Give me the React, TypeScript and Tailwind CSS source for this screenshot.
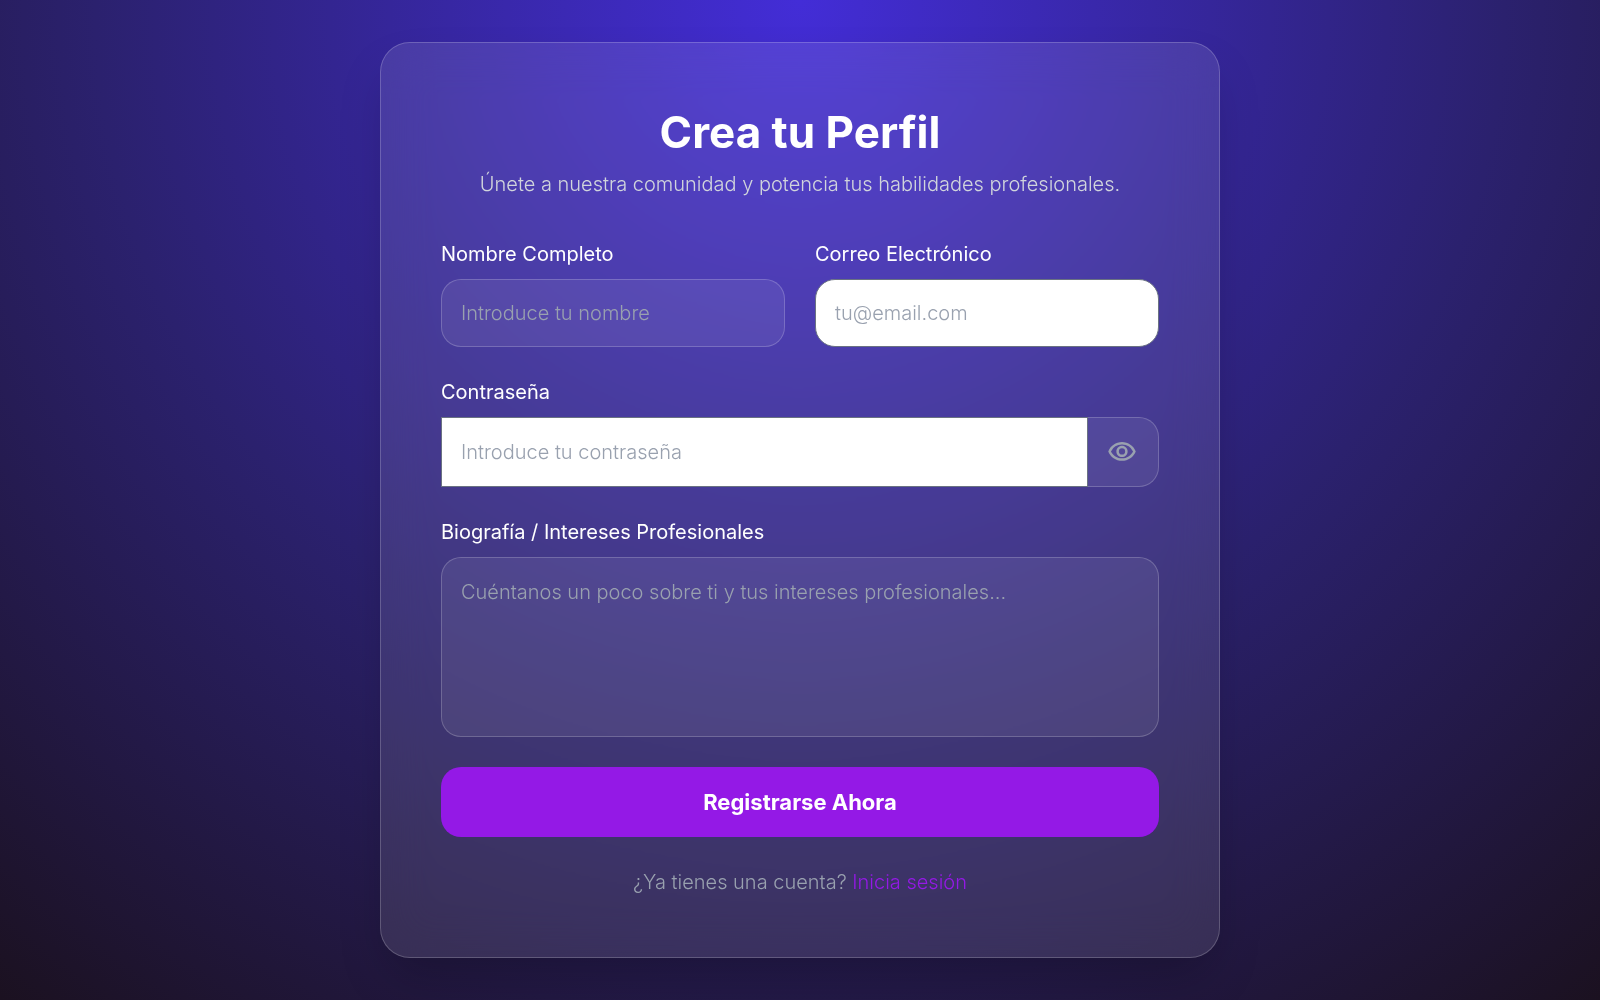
import { useState } from 'react';
import { MdOutlineVisibility } from 'react-icons/md';

const label = 'text-xl leading-[30px] text-white';
const field = 'w-full px-[19px] text-xl leading-[30px] font-light text-white placeholder:text-gray-400 outline-none border';
const glass = 'rounded-[20px] border-white/20 bg-white/7';

export default function App() {
  const [visible, setVisible] = useState(false);
  return (
    <main className="flex min-h-screen items-center justify-center bg-[#1b1120] bg-[radial-gradient(circle_at_top,#432dd7,#2b216e_55%,#1b1120)] p-10 font-['Inter',sans-serif]">
      <section className="w-full max-w-[840px] rounded-[30px] border border-white/20 bg-white/10 p-[60px] shadow-2xl backdrop-blur-xl">
        <header className="text-center">
          <h1 className="text-[44px] leading-[58px] font-bold text-white">Crea tu Perfil</h1>
          <p className="mt-2 text-xl leading-[30px] font-light text-gray-300">Únete a nuestra comunidad y potencia tus habilidades profesionales.</p>
        </header>
        <form className="mt-10 flex flex-col gap-[30px]">
          <div className="grid grid-cols-2 gap-[30px]">
            <div className="flex flex-col gap-[10px]">
              <label className={label} htmlFor="name">Nombre Completo</label>
              <input id="name" placeholder="Introduce tu nombre" className={`${field} ${glass} h-[68px]`} />
            </div>
            <div className="flex flex-col gap-[10px]">
              <label className={label} htmlFor="email">Correo Electrónico</label>
              <input id="email" type="email" placeholder="tu@email.com" className={`${field} h-[68px] rounded-[20px] border-gray-500 bg-white`} />
            </div>
          </div>
          <div className="flex flex-col gap-[10px]">
            <label className={label} htmlFor="password">Contraseña</label>
            <div className="flex">
              <input id="password" type={visible ? 'text' : 'password'} placeholder="Introduce tu contraseña" className={`${field} h-[70px] min-w-0 flex-1 border-gray-500 bg-white`} />
              <button type="button" aria-label="Mostrar contraseña" onClick={() => setVisible(!visible)} className="flex w-[71px] items-center justify-center rounded-r-[20px] border border-l-0 border-white/20 bg-white/7 pr-[2px] text-gray-400">
                <MdOutlineVisibility size={30} />
              </button>
            </div>
          </div>
          <div className="flex flex-col gap-[10px]">
            <label className={label} htmlFor="bio">Biografía / Intereses Profesionales</label>
            <textarea id="bio" placeholder="Cuéntanos un poco sobre ti y tus intereses profesionales..." className={`${field} ${glass} h-[180px] resize-none py-[19px]`} />
          </div>
          <button type="submit" className="h-[70px] rounded-[20px] bg-[#9419e6] text-[22px] font-bold text-white">Registrarse Ahora</button>
        </form>
        <p className="mt-[30px] text-center text-xl leading-[30px] font-light text-gray-400">¿Ya tienes una cuenta? <a href="#" className="text-[#9419e6]">Inicia sesión</a></p>
      </section>
    </main>
  );
}
